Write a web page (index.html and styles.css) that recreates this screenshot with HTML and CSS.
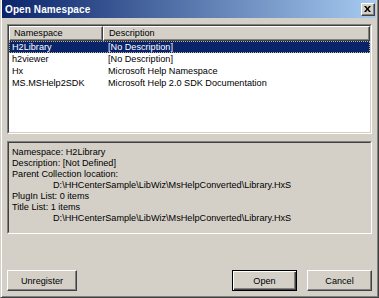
FILE: index.html
```html
<!DOCTYPE html>
<html>
<head>
<meta charset="utf-8">
<link rel="stylesheet" href="styles.css">
</head>
<body>
<div class="window">
  <div class="titlebar">
    <span class="title">Open Namespace</span>
    <span class="close"><svg width="7" height="6" viewBox="0 0 7 6"><path d="M0 0h2l1.5 2 1.5-2h2l-2.5 3 2.5 3h-2l-1.5-2-1.5 2h-2l2.5-3z" fill="#000"/></svg></span>
  </div>
  <div class="content">
    <div class="list">
      <div class="list-inner">
        <div class="header">
          <div class="hcell c1">Namespace</div>
          <div class="hcell c2">Description</div>
        </div>
        <div class="row selected"><span class="c1">H2Library</span><span class="c2">[No Description]</span></div>
        <div class="row"><span class="c1">h2viewer</span><span class="c2">[No Description]</span></div>
        <div class="row"><span class="c1">Hx</span><span class="c2">Microsoft Help Namespace</span></div>
        <div class="row"><span class="c1">MS.MSHelp2SDK</span><span class="c2">Microsoft Help 2.0 SDK Documentation</span></div>
      </div>
    </div>
    <div class="details">
      <div class="details-inner">
        <div class="line">Namespace: H2Library</div>
        <div class="line">Description: [Not Defined]</div>
        <div class="line">Parent Collection location:</div>
        <div class="line indent">D:\HHCenterSample\LibWiz\MsHelpConverted\Library.HxS</div>
        <div class="line">PlugIn List: 0 items</div>
        <div class="line">Title List: 1 items</div>
        <div class="line indent">D:\HHCenterSample\LibWiz\MsHelpConverted\Library.HxS</div>
      </div>
    </div>
    <div class="buttons">
      <button class="btn unregister">Unregister</button>
      <div class="right">
        <button class="btn default">Open</button>
        <button class="btn">Cancel</button>
      </div>
    </div>
  </div>
</div>
</body>
</html>
```

FILE: styles.css
```css
html, body {
  margin: 0;
  padding: 0;
  background: #d4d0c8;
}
body {
  font-family: "Liberation Sans", Arial, sans-serif;
  font-size: 9.15px;
  color: #000;
}
.window {
  width: 379px;
  height: 298px;
  box-sizing: border-box;
  background: #d4d0c8;
  border-left: 1px solid #d4d0c8;
  border-right: 1px solid #404040;
  border-bottom: 1px solid #404040;
  box-shadow: inset 1px 0 #fff, inset -1px -1px #808080;
  padding: 0 2px 2px 1px;
  display: flex;
  flex-direction: column;
}
.titlebar {
  height: 18px;
  flex: none;
  display: flex;
  align-items: center;
  justify-content: space-between;
  background: linear-gradient(to right, #0a246a, #a6caf0);
  padding: 0 1px 0 3px;
}
.title {
  color: #fff;
  font-weight: bold;
  font-size: 10px;
  letter-spacing: 0.1px;
}
.close {
  width: 14px;
  height: 13px;
  box-sizing: border-box;
  background: #d4d0c8;
  border: 1px solid;
  border-color: #fff #404040 #404040 #fff;
  box-shadow: inset -1px -1px #808080;
  display: flex;
  align-items: center;
  justify-content: center;
  padding: 0 1px 1px 0;
}
.close svg { display: block; }
.content {
  flex: 1;
  display: flex;
  flex-direction: column;
  padding: 6px 4px 4px 5px;
}
.list {
  height: 110px;
  flex: none;
  box-sizing: border-box;
  border: 1px solid;
  border-color: #808080 #fff #fff #808080;
}
.list-inner {
  height: 100%;
  box-sizing: border-box;
  border: 1px solid;
  border-color: #404040 #d4d0c8 #d4d0c8 #404040;
  background: #fff;
}
.header {
  display: flex;
  height: 15px;
}
.hcell {
  box-sizing: border-box;
  height: 15px;
  line-height: 13px;
  background: #d4d0c8;
  border: 1px solid;
  border-color: #fff #404040 #404040 #fff;
  box-shadow: inset -1px -1px #808080;
}
.hcell.c1 { width: 94px; padding-left: 4px; }
.hcell.c2 { flex: 1; padding-left: 5px; }
.row {
  display: flex;
  height: 12px;
  line-height: 12px;
  white-space: nowrap;
}
.row .c1 { width: 94px; padding-left: 3px; box-sizing: border-box; }
.row .c2 { padding-left: 5px; }
.row.selected {
  background: #0a246a;
  color: #fff;
  outline: 1px dotted #b8b090;
  outline-offset: -1px;
}
.details {
  height: 93px;
  flex: none;
  margin-top: 7px;
  box-sizing: border-box;
  border: 1px solid;
  border-color: #808080 #fff #fff #808080;
}
.details-inner {
  height: 100%;
  box-sizing: border-box;
  border: 1px solid;
  border-color: #404040 #d4d0c8 #d4d0c8 #404040;
  padding: 4px 0 0 3px;
}
.line {
  height: 11px;
  line-height: 11px;
  white-space: nowrap;
}
.line.indent { padding-left: 41px; }
.buttons {
  margin-top: auto;
  display: flex;
  justify-content: space-between;
  height: 21px;
}
.right {
  display: flex;
  gap: 10px;
}
.btn {
  font-family: "Liberation Sans", Arial, sans-serif;
  font-size: 9.15px;
  color: #000;
  height: 21px;
  width: 65px;
  padding: 0;
  margin: 0;
  box-sizing: border-box;
  background: #d4d0c8;
  border: 1px solid;
  border-color: #fff #404040 #404040 #fff;
  box-shadow: inset -1px -1px #808080;
  border-radius: 0;
}
.btn.unregister { width: 70px; }
.btn.default {
  border: 1px solid #000;
  box-shadow: inset 1px 1px #fff, inset -1px -1px #404040, inset -2px -2px #808080;
}
```
